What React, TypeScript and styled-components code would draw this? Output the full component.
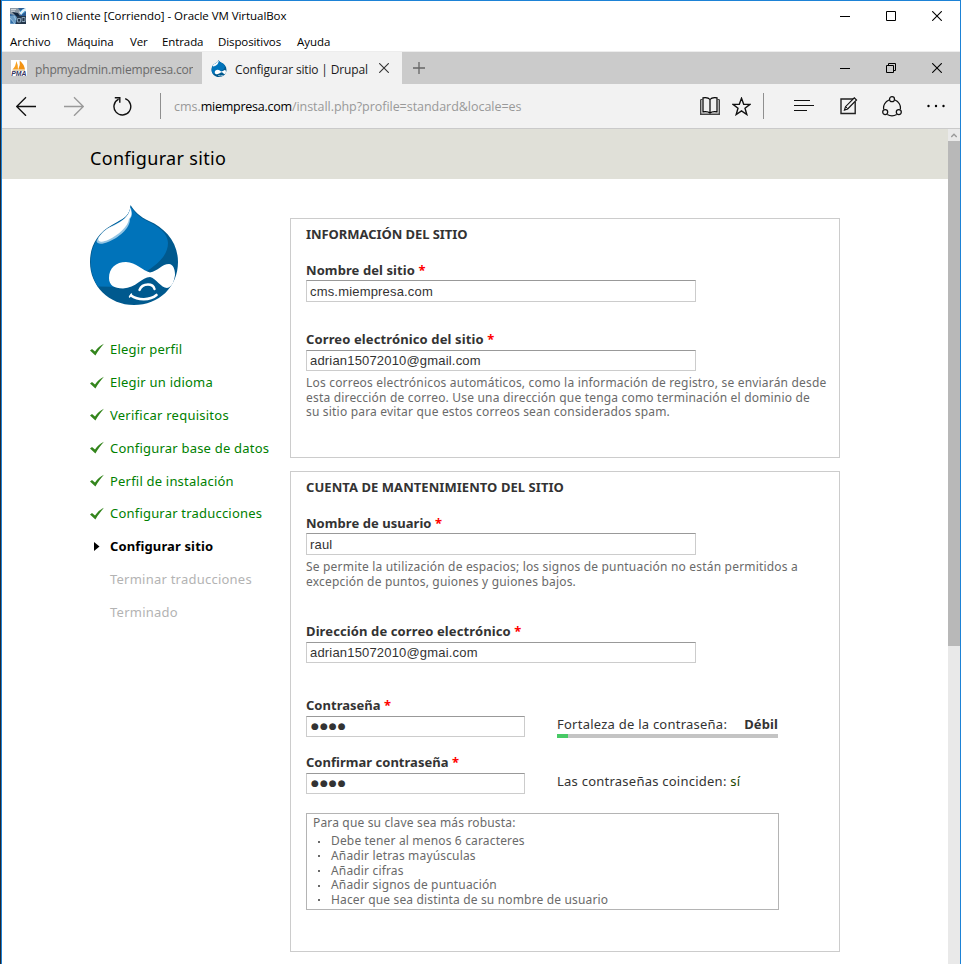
import React from 'react';
import styled, { createGlobalStyle } from 'styled-components';

const Global = createGlobalStyle`
  * { box-sizing: border-box; }
  body { margin: 0; overflow: hidden; background: #fff; }
  svg { display: block; flex: none; }
`;

const chromeFont = "'Open Sans', sans-serif";
const pageFont = "'Noto Sans', sans-serif";

const Window = styled.div`
  width: 961px;
  height: 964px;
  border-left: 1px solid #23272f;
  overflow: hidden;
`;
const Frame = styled.div`
  height: 964px;
  border: 1px solid #1d82d6;
  border-bottom: 0;
  display: flex;
  flex-direction: column;
  background: #fff;
`;

const TitleBar = styled.div`
  display: flex;
  align-items: center;
  height: 29px;
  flex: none;
  padding-left: 8px;
`;
const TitleText = styled.span`
  margin-left: 5px;
  font: 11.5px/16px ${chromeFont};
  letter-spacing: -0.05px;
  color: #000;
  white-space: nowrap;
`;
const Controls = styled.div`
  display: flex;
  margin-left: auto;
  height: 100%;
  align-items: center;
`;
const ControlButton = styled.div`
  width: 46px;
  display: flex;
  justify-content: center;
`;
const MenuBar = styled.div`
  display: flex;
  height: 22px;
  flex: none;
  padding: 3px 0 0 8px;
  gap: 16px;
  border-bottom: 1px solid #ededed;
`;
const MenuItem = styled.span<{ $w: number; $track?: number }>`
  width: ${p => p.$w}px;
  font: 11.5px/17px ${chromeFont};
  letter-spacing: ${p => p.$track ?? 0}px;
  color: #000;
  white-space: nowrap;
`;

const TabStrip = styled.div`
  display: flex;
  height: 32px;
  flex: none;
  background: #cbcbcb;
`;
const Tab = styled.div<{ $active?: boolean }>`
  width: 200px;
  display: flex;
  align-items: center;
  padding: 0 9px;
  background: ${p => (p.$active ? '#f2f2f2' : '#cbcbcb')};
  color: ${p => (p.$active ? '#1a1a1a' : '#6a6a6a')};
`;
const TabTitle = styled.span<{ $w: number }>`
  width: ${p => p.$w}px;
  margin-left: 8px;
  overflow: hidden;
  white-space: nowrap;
  font: 12px/20px ${chromeFont};
  letter-spacing: -0.16px;
  padding-top: 3px;
`;
const TabClose = styled.div`
  margin-left: 10px;
  padding-bottom: 1px;
`;
const NewTab = styled.div`
  display: flex;
  align-items: center;
  margin-left: 11px;
`;

const Toolbar = styled.div`
  display: flex;
  align-items: center;
  height: 45px;
  flex: none;
  padding: 0 14px;
  background: #f2f2f2;
  border-bottom: 1px solid #cacaca;
`;
const ToolIcon = styled.div<{ $gap: number }>`
  margin-left: ${p => p.$gap}px;
`;
const Divider = styled.div<{ $gap: number }>`
  width: 1px;
  height: 26px;
  margin-left: ${p => p.$gap}px;
  background: #8f8f8f;
`;
const Address = styled.div`
  width: 526px;
  padding: 2px 0 0 13px;
  font: 12.5px/20px ${chromeFont};
  letter-spacing: -0.04px;
  color: #999;
  white-space: nowrap;
`;
const Domain = styled.span`
  color: #000;
  letter-spacing: -0.24px;
`;

const Viewport = styled.div`
  display: flex;
  flex: 1;
  min-height: 0;
`;
const Page = styled.div`
  flex: 1;
  overflow: hidden;
  font-family: ${pageFont};
`;
const Scrollbar = styled.div`
  width: 12px;
  background: #e9e9e9;
`;
const ScrollUp = styled.div`
  height: 12px;
  display: flex;
  align-items: center;
  justify-content: center;
`;
const Thumb = styled.div`
  height: 505px;
  background: #b8b8b8;
`;

const Banner = styled.header`
  height: 50px;
  padding: 17px 0 0 88px;
  background: #e0e0d8;
`;
const BannerTitle = styled.h1`
  margin: 0;
  font: 400 18px/25px ${pageFont};
  letter-spacing: 0.32px;
  color: #000;
`;
const Columns = styled.div`
  display: flex;
  padding-left: 88px;
`;
const Sidebar = styled.aside`
  width: 200px;
  padding-top: 26px;
`;
const Steps = styled.ol`
  list-style: none;
  margin: 28px 0 0;
  padding: 0;
`;
type StepState = 'done' | 'active' | 'todo';
const stepColors: Record<StepState, string> = { done: '#008000', active: '#000', todo: '#b3b3b3' };
const Step = styled.li<{ $state: StepState; $track: number }>`
  display: flex;
  align-items: center;
  height: 32.8px;
  font-size: 13px;
  line-height: 18px;
  font-weight: ${p => (p.$state === 'active' ? 700 : 400)};
  letter-spacing: ${p => p.$track}px;
  color: ${p => stepColors[p.$state]};
  white-space: nowrap;
`;
const StepMark = styled.span`
  width: 20px;
`;

const Main = styled.main`
  width: 550px;
  padding-top: 39px;
`;
const Fieldset = styled.section<{ $h: number }>`
  height: ${p => p.$h}px;
  margin-bottom: 13px;
  padding: 6px 0 0 15px;
  border: 1px solid #ccc;
`;
const Legend = styled.h2<{ $track: number }>`
  margin: 0 0 18px;
  font: 700 13px/18px ${pageFont};
  letter-spacing: ${p => p.$track}px;
  color: #333;
`;
const Field = styled.div<{ $top?: number }>`
  margin-top: ${p => p.$top ?? 0}px;
`;
const Label = styled.label<{ $gap?: number; $track?: number }>`
  display: block;
  height: 18px;
  margin-bottom: ${p => p.$gap ?? 1}px;
  font: 700 13px/18px ${pageFont};
  letter-spacing: ${p => p.$track ?? 0.09}px;
  color: #333;
  white-space: nowrap;
`;
const Required = styled.span`
  color: #f00;
`;
const TextBox = styled.div<{ $w?: number; $h?: number }>`
  width: ${p => p.$w ?? 390}px;
  height: ${p => p.$h ?? 22}px;
  padding: ${p => (p.$h ? 1 : 2)}px 3px 0;
  border: 1px solid #ccc;
  border-top-color: #999;
  font: 13px/18px 'Liberation Sans', Arial, sans-serif;
  letter-spacing: 0.18px;
  color: #333;
  white-space: nowrap;
`;
const Dots = styled.div`
  margin-left: 1px;
  font: 9px/17px 'DejaVu Sans', sans-serif;
  letter-spacing: 1.05px;
`;
const Help = styled.p`
  margin: 5px 0 0;
  font: 12px/14.6px ${pageFont};
  letter-spacing: 0.19px;
  color: #6a6a6a;
  white-space: nowrap;
`;
const PasswordRow = styled.div<{ $top: number }>`
  display: flex;
  margin-top: ${p => p.$top}px;
`;
const PasswordSide = styled.div`
  width: 221px;
  margin: 19px 0 0 32px;
  font-size: 13px;
  line-height: 18px;
  letter-spacing: 0.24px;
  color: #333;
  white-space: nowrap;
`;
const StrengthLine = styled.div`
  display: flex;
  justify-content: space-between;
`;
const Strong = styled.b`
  letter-spacing: 0.1px;
`;
const Meter = styled.div`
  height: 4px;
  margin-top: 1px;
  background: #c4c4c4;
`;
const MeterFill = styled.div`
  width: 11px;
  height: 4px;
  background: #47c965;
`;
const Match = styled.span`
  color: #234600;
`;
const Suggestions = styled.div`
  width: 473px;
  height: 97px;
  margin-top: 19px;
  padding: 1px 6px 0;
  border: 1px solid #b4b4b4;
  font-size: 12px;
  line-height: 16px;
  letter-spacing: 0.16px;
  color: #6a6a6a;
`;
const SuggestionList = styled.ul`
  list-style: none;
  margin: 3px 0 0;
  padding: 0;
`;
const Suggestion = styled.li`
  display: flex;
  align-items: center;
  height: 14.7px;
  line-height: 14.7px;
  &::before {
    content: '';
    width: 2px;
    height: 2px;
    margin: 0 11px 0 5px;
    background: #6a6a6a;
  }
`;

const Minimize = () => (
  <svg width="10" height="10" viewBox="0 0 10 10"><path d="M0 5.5h10" stroke="#000" /></svg>
);
const Maximize = () => (
  <svg width="10" height="10" viewBox="0 0 10 10"><path d="M.5.5h9v9h-9z" fill="none" stroke="#000" /></svg>
);
const Restore = () => (
  <svg width="10" height="10" viewBox="0 0 10 10"><path d="M.5 2.5h7v7h-7zM2.5 2.5v-2h7v7h-2" fill="none" stroke="#000" /></svg>
);
const Cross = ({ color = '#000' }: { color?: string }) => (
  <svg width="10" height="10" viewBox="0 0 10 10"><path d="M.2.200l9.600 9.600M9.800.200l-9.600 9.600" stroke={color} strokeWidth="1.100" /></svg>
);

const VmIcon = () => (
  <svg width="16" height="16" viewBox="0 0 16 16">
    <rect width="16" height="16" fill="#2c5f96" />
    <path d="M0 0h8l4 5-4 3-8-2z" fill="#8d9aa6" />
    <path d="M1 1.500h5M1 3.200h4" stroke="#dfe6ea" strokeWidth=".8" />
    <path d="M9 4l6-4h1v3l-5 4z" fill="#dff0fa" />
    <path d="M0 8l5-1 3 3-3 6H0z" fill="#6b9cc4" />
    <path d="M0 10l5 6H0zM4 8l2 4" fill="#2f6da8" stroke="#a8cbe4" strokeWidth=".8" />
    <path d="M2 4l6 1 3 5-2 1-4-4z" fill="#10243c" />
    <path d="M7 8h9v8H6z" fill="#24364a" />
    <path d="M7.500 10.500h3v3.500h-3zM12 9.500h3v4h-3z" fill="none" stroke="#8fa9c0" strokeWidth=".9" />
    <path d="M10 4l3-3M12 6l3-3" stroke="#62b7e5" />
  </svg>
);
const PmaIcon = () => (
  <svg width="16" height="16" viewBox="0 0 16 16">
    <rect width="16" height="16" fill="#fff" />
    <path d="M1.500 9.500Q5 6 5.300 1Q7.300 5 7 9.500z" fill="#f8a020" />
    <path d="M7.200 9.500Q9.500 5 8.700 .500Q13 4 14 9.500z" fill="#f39313" />
    <path d="M1.500 10.300h12.500" stroke="#c8b48c" strokeWidth=".8" />
    <text x=".3" y="15.800" fontFamily="Liberation Sans" fontSize="6.800" fontWeight="700" fontStyle="italic" textLength="15.200" lengthAdjust="spacingAndGlyphs" fill="#33335f">PMA</text>
  </svg>
);

const Druplicon = ({ w, h, small }: { w: number; h: number; small?: boolean }) => (
  <svg width={w} height={h} viewBox="0 0 88 100">
    <path d="M40.500 0C45 7 49 11 59 16C75 23 88 37 88 57C88 82 69 100 44 100C19 100 0 81 0 57C0 40 8 28 22 20C32 14 40 12 40.500 0z" fill="#00598e" />
    <path d="M40.500 1C45 8 49 12 58 16.500C69 21.500 78 29 78 38C78 50 68 59 57 66L50 70L34 82L8 81.500C3 74 .8 66 .8 57C.8 40 9 28.500 22.500 20.700C32 14.500 40 12 40.500 1z" fill="#0073ba" />
    <path d="M6.500 36C11 27 17 23 24 20C32 16 39 12 40.500 2C42 7 43 10 40 14C40 24 28 33 18 37C12 39.500 7 39.500 6.500 36z" fill="#93c5e4" />
    <path d="M8.500 33C13 26 18 23 25 20C32 16 39 12 40.300 3C41.800 8 42 11 39 14C38 22 28 30 19 34.500C12 38 7 37 8.500 33z" fill="#fff" />
    <path d="M19 73C19 63 26 57 36 57C46 57 53 66 60 67.500C68 66 72 59 79 59C83 59 85 64 85 70C84 77 82 82 77 83C71 83 66 73 60 72C52 72 46 83 33 83.500C24 83.500 19 80 19 73z" fill="#fff" />
    {small ? (
      <path d="M40 91q13 6 26 0" fill="none" stroke="#fff" strokeWidth="4" />
    ) : (
      <>
        <path d="M49.500 85C51 81 54 79.500 58 79.500C62 79.500 64 82 64.500 84" fill="none" stroke="#fff" strokeWidth="2.400" strokeLinecap="round" />
        <path d="M41 90.500C48 95.500 60 95.500 66.500 90" fill="none" stroke="#fff" strokeWidth="2.600" strokeLinecap="round" />
        <path d="M39.500 92l2-3" stroke="#fff" strokeWidth="1.500" strokeLinecap="round" />
      </>
    )}
  </svg>
);

const Arrow = ({ color, flip }: { color: string; flip?: boolean }) => (
  <svg width="20" height="20" viewBox="0 0 20 20">
    <path d={flip ? 'M0 10.500h19M10 1.200l9.300 9.300-9.300 9.300' : 'M20 10.500H1M10 1.200L.7 10.500 10 19.800'} fill="none" stroke={color} strokeWidth="1.300" />
  </svg>
);
const Refresh = () => (
  <svg width="19" height="20" viewBox="0 0 19 20">
    <path d="M12.200 2.700A8.400 8.400 0 1 1 5.600 3.100M1.800 1.700h5v5" fill="none" stroke="#111" strokeWidth="1.400" />
  </svg>
);
const Book = () => (
  <svg width="20" height="20" viewBox="0 0 20 20">
    <path d="M.7 3.500v14.700h18.600V3.500" fill="none" stroke="#444" strokeWidth="1.400" />
    <path d="M10 3.500C8.500 1.500 5 1.500 3 1.800v14c2.500-.3 5.500-.2 7 1.200 1.500-1.400 4.500-1.500 7-1.200v-14c-2-.3-5.500-.3-7 1.700zM10 3.500V17" fill="none" stroke="#000" strokeWidth="1.200" />
    <path d="M.7 3.500H3M17 3.500h2.300" stroke="#444" />
  </svg>
);
const Star = () => (
  <svg width="19" height="19" viewBox="0 0 19 19">
    <path d="M9.500 1.300l2.200 5.900 6.300.2-5 3.900 1.800 6.200-5.300-3.600-5.300 3.600L6 11.300 1 7.400l6.300-.2z" fill="none" stroke="#111" strokeWidth="1.400" />
  </svg>
);
const Hub = () => (
  <svg width="20" height="12" viewBox="0 0 20 12">
    <path d="M0 .5h16M0 5.500h20M0 10.500h13" stroke="#111" strokeWidth="1" />
  </svg>
);
const Note = () => (
  <svg width="18" height="18" viewBox="0 0 18 18">
    <path d="M13.500 2H1v14.500h14.200V5" fill="none" stroke="#222" strokeWidth="1.400" />
    <path d="M4.500 13l1-3.300L14.300.8l2.200 2.200-8.800 9z" fill="#f2f2f2" stroke="#111" strokeWidth="1.200" />
    <path d="M6 10l1.800 1.700" stroke="#111" />
  </svg>
);
const Share = () => (
  <svg width="20" height="21" viewBox="0 0 20 21">
    <g fill="none" stroke="#111" strokeWidth="1.250">
      <path d="M7 4A8.500 8.500 0 0 0 1.700 13.400M13 4A8.500 8.500 0 0 1 18.300 13.400M5.300 18.500Q10 21.200 14.700 18.500" />
      <circle cx="10" cy="3.200" r="2.500" />
      <circle cx="3.200" cy="16" r="2.500" />
      <circle cx="16.800" cy="16" r="2.500" />
    </g>
  </svg>
);
const More = () => (
  <svg width="18" height="4" viewBox="0 0 18 4">
    <circle cx="1.500" cy="2" r="1.200" /><circle cx="9" cy="2" r="1.200" /><circle cx="16.500" cy="2" r="1.200" />
  </svg>
);
const Check = () => (
  <svg width="14" height="13" viewBox="0 0 14 13">
    <path d="M0 7.500L2 6l3 2.500C7.500 5 10 2.500 14 .8C11 4.200 8.300 7.500 5.400 12.400z" fill="#33851c" />
  </svg>
);
const Pointer = () => (
  <svg width="14" height="9" viewBox="0 0 14 9"><path d="M4 0l5.500 4.500L4 9z" fill="#000" /></svg>
);

const menu: [string, number, number][] = [
  ['Archivo', 41, 0.1], ['Máquina', 47, -0.1], ['Ver', 16, -0.1], ['Entrada', 40, -0.1], ['Dispositivos', 63, -0.1], ['Ayuda', 34, 0],
];
const steps: [string, StepState, number][] = [
  ['Elegir perfil', 'done', 0.19],
  ['Elegir un idioma', 'done', 0.22],
  ['Verificar requisitos', 'done', 0.25],
  ['Configurar base de datos', 'done', 0.21],
  ['Perfil de instalación', 'done', 0.2],
  ['Configurar traducciones', 'done', 0.2],
  ['Configurar sitio', 'active', 0.13],
  ['Terminar traducciones', 'todo', 0.23],
  ['Terminado', 'todo', 0.25],
];
const tips = [
  'Debe tener al menos 6 caracteres',
  'Añadir letras mayúsculas',
  'Añadir cifras',
  'Añadir signos de puntuación',
  'Hacer que sea distinta de su nombre de usuario',
];

const FieldLabel = ({ text, gap, track }: { text: string; gap?: number; track?: number }) => (
  <Label $gap={gap} $track={track}>{text} <Required>*</Required></Label>
);

export default function App() {
  return (
    <Window>
      <Global />
      <Frame>
        <TitleBar>
          <VmIcon />
          <TitleText>win10 cliente [Corriendo] - Oracle VM VirtualBox</TitleText>
          <Controls>
            <ControlButton><Minimize /></ControlButton>
            <ControlButton><Maximize /></ControlButton>
            <ControlButton><Cross /></ControlButton>
          </Controls>
        </TitleBar>
        <MenuBar>
          {menu.map(([t, w, k]) => <MenuItem key={t} $w={w} $track={k}>{t}</MenuItem>)}
        </MenuBar>
        <TabStrip>
          <Tab>
            <PmaIcon />
            <TabTitle $w={158}>phpmyadmin.miempresa.com</TabTitle>
          </Tab>
          <Tab $active>
            <Druplicon w={16} h={17} small />
            <TabTitle $w={134}>Configurar sitio | Drupal</TabTitle>
            <TabClose><Cross color="#333" /></TabClose>
          </Tab>
          <NewTab>
            <svg width="12" height="12" viewBox="0 0 12 12"><path d="M0 6h12M6 0v12" stroke="#666" strokeWidth="1.300" /></svg>
          </NewTab>
          <Controls>
            <ControlButton><Minimize /></ControlButton>
            <ControlButton><Restore /></ControlButton>
            <ControlButton><Cross /></ControlButton>
          </Controls>
        </TabStrip>
        <Toolbar>
          <Arrow color="#111" />
          <ToolIcon $gap={28}><Arrow color="#999" flip /></ToolIcon>
          <ToolIcon $gap={29}><Refresh /></ToolIcon>
          <Divider $gap={28} />
          <Address>cms.<Domain>miempresa.com</Domain>/install.php?profile=standard&amp;locale=es</Address>
          <ToolIcon $gap={13}><Book /></ToolIcon>
          <ToolIcon $gap={12}><Star /></ToolIcon>
          <Divider $gap={12} />
          <ToolIcon $gap={30}><Hub /></ToolIcon>
          <ToolIcon $gap={26}><Note /></ToolIcon>
          <ToolIcon $gap={24}><Share /></ToolIcon>
          <ToolIcon $gap={25}><More /></ToolIcon>
        </Toolbar>
        <Viewport>
          <Page>
            <Banner><BannerTitle>Configurar sitio</BannerTitle></Banner>
            <Columns>
              <Sidebar>
                <Druplicon w={88} h={100} />
                <Steps>
                  {steps.map(([text, state, track]) => (
                    <Step key={text} $state={state} $track={track}>
                      <StepMark>{state === 'done' ? <Check /> : state === 'active' ? <Pointer /> : null}</StepMark>
                      {text}
                    </Step>
                  ))}
                </Steps>
              </Sidebar>
              <Main>
                <Fieldset $h={240}>
                  <Legend $track={-0.06}>INFORMACIÓN DEL SITIO</Legend>
                  <Field>
                    <FieldLabel text="Nombre del sitio" />
                    <TextBox>cms.miempresa.com</TextBox>
                  </Field>
                  <Field $top={28}>
                    <FieldLabel text="Correo electrónico del sitio" gap={2} track={0.12} />
                    <TextBox $h={21}>adrian15072010@gmail.com</TextBox>
                    <Help>
                      Los correos electrónicos automáticos, como la información de registro, se enviarán desde<br />
                      esta dirección de correo. Use una dirección que tenga como terminación el dominio de<br />
                      su sitio para evitar que estos correos sean considerados spam.
                    </Help>
                  </Field>
                </Fieldset>
                <Fieldset $h={481}>
                  <Legend $track={0.06}>CUENTA DE MANTENIMIENTO DEL SITIO</Legend>
                  <Field>
                    <FieldLabel text="Nombre de usuario" track={0.05} />
                    <TextBox>raul</TextBox>
                    <Help>
                      Se permite la utilización de espacios; los signos de puntuación no están permitidos a<br />
                      excepción de puntos, guiones y guiones bajos.
                    </Help>
                  </Field>
                  <Field $top={33}>
                    <FieldLabel text="Dirección de correo electrónico" gap={2} track={0.11} />
                    <TextBox $h={21}>adrian15072010@gmai.com</TextBox>
                  </Field>
                  <PasswordRow $top={33}>
                    <Field>
                      <FieldLabel text="Contraseña" gap={2} track={0.02} />
                      <TextBox $w={219} $h={21}><Dots>●●●●</Dots></TextBox>
                    </Field>
                    <PasswordSide>
                      <StrengthLine><span>Fortaleza de la contraseña:</span><Strong>Débil</Strong></StrengthLine>
                      <Meter><MeterFill /></Meter>
                    </PasswordSide>
                  </PasswordRow>
                  <PasswordRow $top={15}>
                    <Field>
                      <FieldLabel text="Confirmar contraseña" gap={2} track={0.02} />
                      <TextBox $w={219} $h={21}><Dots>●●●●</Dots></TextBox>
                    </Field>
                    <PasswordSide>Las contraseñas coinciden: <Match>sí</Match></PasswordSide>
                  </PasswordRow>
                  <Suggestions>
                    Para que su clave sea más robusta:
                    <SuggestionList>
                      {tips.map(t => <Suggestion key={t}>{t}</Suggestion>)}
                    </SuggestionList>
                  </Suggestions>
                </Fieldset>
              </Main>
            </Columns>
          </Page>
          <Scrollbar>
            <ScrollUp>
              <svg width="6" height="5" viewBox="0 0 6 5"><path d="M.3 4L3 1.200 5.700 4" fill="none" stroke="#999" strokeWidth="1.300" /></svg>
            </ScrollUp>
            <Thumb />
          </Scrollbar>
        </Viewport>
      </Frame>
    </Window>
  );
}
